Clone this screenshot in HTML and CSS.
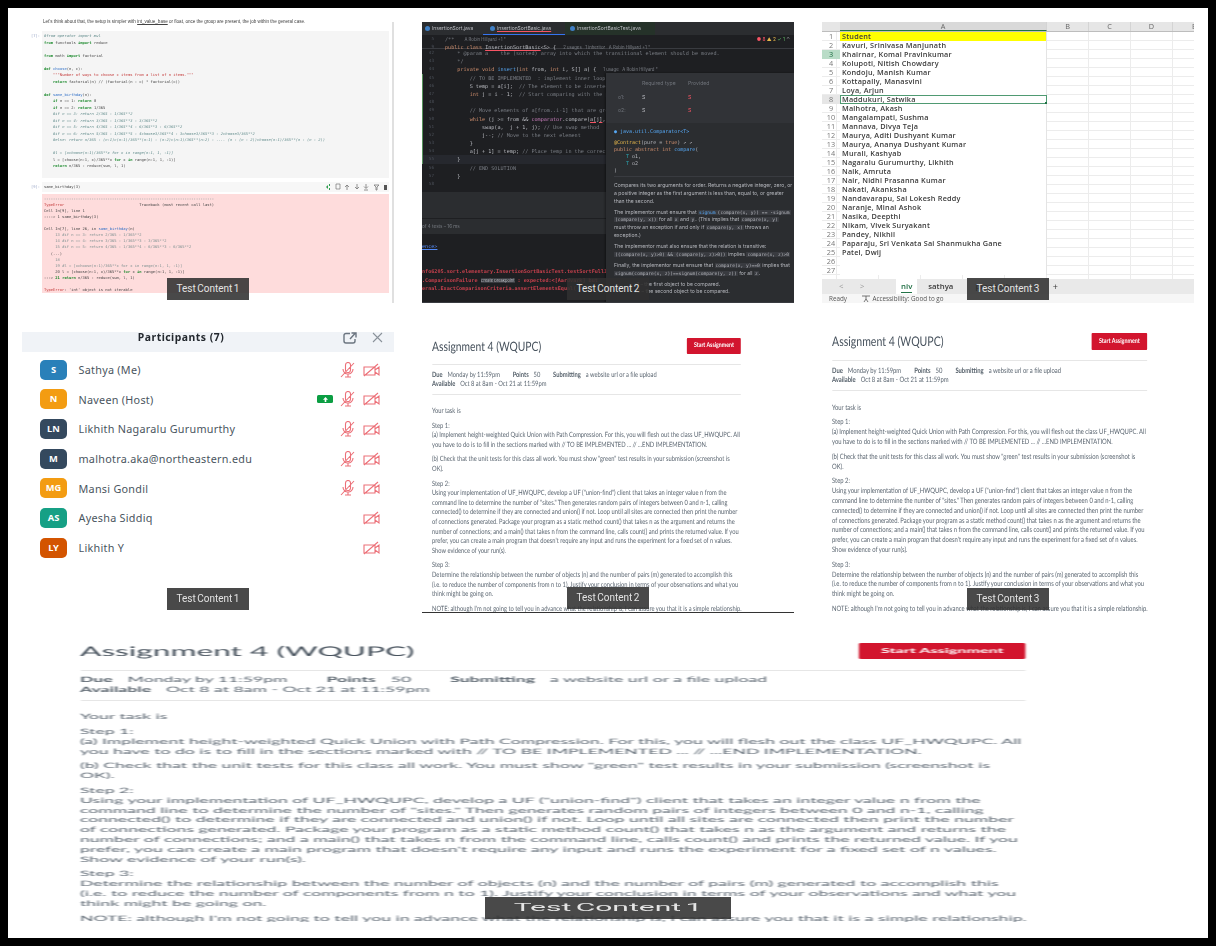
FILE: index.html
```html
<!DOCTYPE html>
<html lang="en">
<head>
    <meta charset="UTF-8">
    <meta name="viewport" content="width=device-width, initial-scale=1.0">
    <title>Test Content</title>
    <link rel="stylesheet" href="styles.css">
</head>
<body>
<div class="frame">

    <!-- Notebook -->
    <div class="tile tile-open">
        <div class="soft notebook">
            <div class="nb-intro">Let's think about that, the setup is simpler with <u>int_value_base</u> or float, once the group are present, the job within the general case.</div>
            <div class="nb-cell">
                <div class="nb-prompt">[7]:</div>
<pre class="nb-code"><i>#from operator import mul</i>
<b>from</b> functools <b>import</b> reduce

<b>from</b> math <b>import</b> factorial

<b>def</b> <s>choose</s>(n, c):
    <em>"""Number of ways to choose c items from a list of n items."""</em>
    <b>return</b> factorial(n) // (factorial(n - c) * factorial(c))

<b>def</b> <s>same_birthday</s>(n):
    <b>if</b> n == 1: <b>return</b> 0
    <b>if</b> n == 2: <b>return</b> 1/365
    <i>#if n == 3: return 2/365 - 1/365**2</i>
    <i>#if n == 4: return 3/365 - 1/365**3 - 3/365**2</i>
    <i>#if n == 5: return 4/365 - 1/365**4 - 6/365**3 - 6/365**2</i>
    <i>#if n == 6: return 5/365 - 1/365**5 - 4choose3/365**4 - 3choose3/365**3 - 2choose3/365**2</i>
    <i>#else: return n/365 - (n-1)c(n-1)/365**(n-1) - (n-2)c(n-1)/365**(n-2) - .... (n - (n - 2))choose(n-1)/365**(n - (n - 2))</i>

    <i>#l = [xchoose(n-1)/365**x for x in range(n-1, 1, -1)]</i>
    l = [choose(n-1, x)/365**x <b>for</b> x <b>in</b> range(n-1, 1, -1)]
    <b>return</b> n/365 - reduce(sum, l, 1)
</pre>
            </div>
            <div class="nb-cell nb-cell-short">
                <div class="nb-prompt">[9]:</div>
                <div class="nb-input">
                    <span>same_birthday(3)</span>
                    <svg class="nb-tools" width="64" height="8" viewBox="0 0 64 8">
                        <path d="M1 4l2-2v4zM4 1h1v2H4zM4 5h1v2H4z" fill="#2e9e4f"/>
                        <path d="M11 1h4v5h-4z" fill="none" stroke="#777" stroke-width=".7"/>
                        <path d="M22 7V2M20 4l2-2 2 2M32 1v5M30 4l2 2 2-2M39 7h4M41 1v4M39 3.500l2 2 2-2M49 2h5l-2 2v3h-1V4z" fill="none" stroke="#777" stroke-width=".8"/>
                        <path d="M59 2h3v5h-3z" fill="#555"/>
                    </svg>
                </div>
            </div>
<pre class="nb-output"><span class="dim">---------------------------------------------------------------------------</span>
<em>TypeError</em>                                 Traceback (most recent call last)
Cell In[9], line 1
----&gt; 1 same_birthday(3)

Cell In[7], line 26, in <s>same_birthday</s>(n)
     <span class="dim">13 #if n == 3: return 2/365 - 1/365**2</span>
     <span class="dim">14 #if n == 4: return 3/365 - 1/365**3 - 3/365**2</span>
     <span class="dim">15 #if n == 5: return 4/365 - 1/365**4 - 6/365**3 - 6/365**2</span>
   (...)
     <span class="dim">18</span>
     <span class="dim">19 #l = [xchoose(n-1)/365**x for x in range(n-1, 1, -1)]</span>
     20 l = [choose(n-1, x)/365**x <b>for</b> x <b>in</b> range(n-1, 1, -1)]
---&gt; <b>21 return</b> n/365 - reduce(sum, l, 1)

<em>TypeError</em>: 'int' object is not iterable</pre>
        </div>
        <div class="tag">Test Content 1</div>
    </div>

    <!-- IDE -->
    <div class="tile">
        <div class="soft ide">
            <div class="ide-tabs">
                <div class="ide-tab">InsertionSort.java</div>
                <div class="ide-tab ide-tab-on">InsertionSortBasic.java</div>
                <div class="ide-tab ide-tab-test">InsertionSortBasicTest.java</div>
            </div>
            <div class="ide-sticky">
                <div class="ide-line"><span class="ln">5</span><code class="gray">/**  <small>A Robin Hillyard +1 *</small></code></div>
                <div class="ide-line"><span class="ln">9</span><code><span class="orange">public class</span> <u class="red-u">InsertionSortBasic</u>&lt;S&gt; { <small>2 usages   1 inheritor   A Robin Hillyard +1 *</small></code></div>
                <div class="ide-status"><span class="red">● 8</span> <span class="amber">▲ 2</span> <span class="grn">✓ 1</span> ⌃</div>
            </div>
            <div class="ide-line"><span class="ln">42</span><code class="gray">    * @param a    the (sorted) array into which the transitional element should be moved.</code></div>
            <div class="ide-line"><span class="ln">43</span><code class="gray">    */</code></div>
            <div class="ide-line"><span class="ln">44</span><code>    <span class="orange">private void</span> <span class="blue">insert</span>(<span class="orange">int</span> from, <span class="orange">int</span> i, S[] a) { <small>1 usage   A Robin Hillyard *</small></code></div>
            <div class="ide-line ide-new"><span class="ln">45</span><code class="gray">        // TO BE IMPLEMENTED  : implement inner loop of insertion sort</code></div>
            <div class="ide-line ide-new"><span class="ln">46</span><code>        S temp = a[i];  <span class="gray">// The element to be inserted</span></code></div>
            <div class="ide-line ide-new"><span class="ln">47</span><code>        <span class="orange">int</span> j = i - 1;  <span class="gray">// Start comparing with the previous</span></code></div>
            <div class="ide-line ide-new"><span class="ln">48</span><code></code></div>
            <div class="ide-line ide-new"><span class="ln">49</span><code class="gray">        // Move elements of a[from..i-1] that are greater</code></div>
            <div class="ide-line ide-new"><span class="ln">50</span><code>        <span class="orange">while</span> (j &gt;= from &amp;&amp; <span class="purple">comparator</span>.compare(<u class="red-u">a[j]</u>, temp</code></div>
            <div class="ide-line ide-new"><span class="ln">51</span><code>            swap(a,  j + 1, j); <span class="gray">// Use swap method</span></code></div>
            <div class="ide-line ide-new"><span class="ln">52</span><code>            j--; <span class="gray">// Move to the next element</span></code></div>
            <div class="ide-line ide-new"><span class="ln">53</span><code>        }</code></div>
            <div class="ide-line ide-new"><span class="ln">54</span><code>        a[j + 1] = temp; <span class="gray">// Place temp in the correct</span></code></div>
            <div class="ide-line ide-new ide-current"><span class="ln">55</span><code>    }</code></div>
            <div class="ide-line"><span class="ln">56</span><code class="gray">        // END SOLUTION</code></div>
            <div class="ide-line"><span class="ln">57</span><code>    }</code></div>
            <div class="ide-line"><span class="ln">58</span><code></code></div>
            <div class="ide-panel"></div>
            <div class="ide-tests">of 4 tests – 16 ms</div>
            <div class="ide-console">
                <div class="con-link">ence&gt;</div>
                <div class="con-err">nfo6205.sort.elementary.InsertionSortBasicTest.testSortFull1</div>
                <div class="con-err">.ComparisonFailure <span class="con-chip">Create breakpoint</span> : expected:&lt;[Aardvark] but</div>
                <div class="con-err">ernal.ExactComparisonCriteria.assertElementsEqual(</div>
            </div>
            <div class="popup">
                <div class="popup-top">
                    <div class="popup-row popup-muted"><span></span><span>Required type</span><span>Provided</span></div>
                    <div class="popup-row"><span class="popup-muted">o1:</span><span>S</span><span class="red">S</span></div>
                    <div class="popup-row"><span class="popup-muted">o2:</span><span>S</span><span class="red">S</span></div>
                </div>
                <div class="popup-body">
<pre class="popup-code"><span class="popup-class"><span class="blue">● java.util.Comparator&lt;T&gt;</span></span>
<span class="amber">@Contract</span>(pure = <span class="orange">true</span>) ↗ ↗
<span class="orange">public abstract int</span> <span class="blue">compare</span>(
    <span class="teal">T</span> o1,
    <span class="teal">T</span> o2
)</pre>
                    <p>Compares its two arguments for order. Returns a negative integer, zero, or<br>a positive integer as the first argument is less than, equal to, or greater<br>than the second.</p>
                    <p>The implementor must ensure that <kbd class="blue">signum</kbd><kbd>(compare(x, y)) == -signum</kbd><br><kbd>(compare(y, x))</kbd> for all <kbd>x</kbd> and <kbd>y</kbd>. (This implies that <kbd>compare(x, y)</kbd><br>must throw an exception if and only if <kbd>compare(y, x)</kbd> throws an<br>exception.)</p>
                    <p>The implementor must also ensure that the relation is transitive:<br><kbd>((compare(x, y)&gt;0) &amp;&amp; (compare(y, z)&gt;0))</kbd> implies <kbd>compare(x, z)&gt;0</kbd></p>
                    <p>Finally, the implementor must ensure that <kbd>compare(x, y)==0</kbd> implies that<br><kbd>signum(compare(x, z))==signum(compare(y, z))</kbd> for all <kbd>z</kbd>.</p>
                    <p class="popup-params">o1 – the first object to be compared.<br>o2 – the second object to be compared.</p>
                </div>
            </div>
            <div class="ide-foot"></div>
        </div>
        <div class="tag">Test Content 2</div>
    </div>

    <!-- Spreadsheet -->
    <div class="tile">
        <div class="soft sheet">
            <div class="sheet-head">
                <span class="rh"></span><span class="col col-a">A</span><span class="col">B</span><span class="col">C</span><span class="col">D</span><span class="col col-e">E</span>
            </div>
            <div class="sheet-rows">
                <div class="row"><span class="rh">1</span><span class="cell cell-title">Student</span></div>
                <div class="row"><span class="rh">2</span><span class="cell">Kavuri, Srinivasa Manjunath</span></div>
                <div class="row"><span class="rh rh-on">3</span><span class="cell">Khairnar, Komal Pravinkumar</span></div>
                <div class="row"><span class="rh">4</span><span class="cell">Kolupoti, Nitish Chowdary</span></div>
                <div class="row"><span class="rh">5</span><span class="cell">Kondoju, Manish Kumar</span></div>
                <div class="row"><span class="rh">6</span><span class="cell">Kottapally, Manasvini</span></div>
                <div class="row"><span class="rh">7</span><span class="cell">Loya, Arjun</span></div>
                <div class="row"><span class="rh rh-sel">8</span><span class="cell cell-sel">Maddukuri, Satwika</span></div>
                <div class="row"><span class="rh">9</span><span class="cell">Malhotra, Akash</span></div>
                <div class="row"><span class="rh">10</span><span class="cell">Mangalampati, Sushma</span></div>
                <div class="row"><span class="rh">11</span><span class="cell">Mannava, Divya Teja</span></div>
                <div class="row"><span class="rh">12</span><span class="cell">Maurya, Aditi Dushyant Kumar</span></div>
                <div class="row"><span class="rh">13</span><span class="cell">Maurya, Ananya Dushyant Kumar</span></div>
                <div class="row"><span class="rh">14</span><span class="cell">Murali, Kashyab</span></div>
                <div class="row"><span class="rh">15</span><span class="cell">Nagaralu Gurumurthy, Likhith</span></div>
                <div class="row"><span class="rh">16</span><span class="cell">Naik, Amruta</span></div>
                <div class="row"><span class="rh">17</span><span class="cell">Nair, Nidhi Prasanna Kumar</span></div>
                <div class="row"><span class="rh">18</span><span class="cell">Nakati, Akanksha</span></div>
                <div class="row"><span class="rh">19</span><span class="cell">Nandavarapu, Sai Lokesh Reddy</span></div>
                <div class="row"><span class="rh">20</span><span class="cell">Naranje, Minal Ashok</span></div>
                <div class="row"><span class="rh">21</span><span class="cell">Nasika, Deepthi</span></div>
                <div class="row"><span class="rh">22</span><span class="cell">Nikam, Vivek Suryakant</span></div>
                <div class="row"><span class="rh">23</span><span class="cell">Pandey, Nikhil</span></div>
                <div class="row"><span class="rh">24</span><span class="cell">Paparaju, Sri Venkata Sai Shanmukha Gane</span></div>
                <div class="row"><span class="rh">25</span><span class="cell">Patel, Dwij</span></div>
                <div class="row"><span class="rh">26</span><span class="cell"></span></div>
                <div class="row"><span class="rh">27</span><span class="cell"></span></div>
            </div>
            <div class="sheet-tabs">
                <span class="sheet-nav">&lt;</span><span class="sheet-nav">&gt;</span>
                <span class="sheet-tab sheet-tab-on"><span>niv</span></span>
                <span class="sheet-tab">sathya</span>
                <span class="sheet-tab">pragnesh</span>
                <span class="sheet-add">+</span>
            </div>
            <div class="sheet-status">
                <span>Ready</span>
                <span class="sheet-acc">
                    <svg width="10" height="7" viewBox="0 0 10 7"><path d="M1 1h8M5 1v3M5 4L3 7M5 4l2 3" fill="none" stroke="#555" stroke-width=".8"/></svg>
                    Accessibility: Good to go
                </span>
            </div>
        </div>
        <div class="tag">Test Content 3</div>
    </div>

    <!-- Participants -->
    <div class="tile">
        <div class="soft people">
            <div class="people-head">
                <span class="people-title">Participants (7)</span>
                <svg class="people-popout" width="14" height="12" viewBox="0 0 14 12"><path d="M7 1.500H3a2 2 0 0 0-2 2V9a2 2 0 0 0 2 2h7a2 2 0 0 0 2-2V7M7 7l5-5.500M8.500 1H13v4.500" fill="none" stroke="#6b7580" stroke-width="1.400"/></svg>
                <svg class="people-close" width="11" height="11" viewBox="0 0 11 11"><path d="M1 1l9 9M10 1l-9 9" stroke="#8a929a" stroke-width="1.100"/></svg>
            </div>
            <div class="person">
                <span class="avatar av-blue">S</span><span class="name">Sathya (Me)</span>
                <svg class="ico-mic" width="15" height="16" viewBox="0 0 15 16"><path d="M5.500 3a2.500 2.500 0 0 1 5 0v5a2.500 2.500 0 0 1-5 0zM3 7a5 5 0 0 0 10 0M8 12v3M5 15h6M1 15L14 1" fill="none" stroke="#ec7078" stroke-width="1.100"/></svg>
                <svg class="ico-cam" width="17" height="14" viewBox="0 0 17 14"><path d="M1 4h11v8H1zM12 7l4-3v8l-4-3M1 13L15 1" fill="none" stroke="#ec7078" stroke-width="1.100"/></svg>
            </div>
            <div class="person">
                <span class="avatar av-orange">N</span><span class="name">Naveen (Host)</span>
                <span class="share"><svg width="5" height="5" viewBox="0 0 5 5"><path d="M2.500 0L5 2.700H3.300V5H1.700V2.700H0z" fill="#fff"/></svg></span>
                <svg class="ico-mic" width="15" height="16" viewBox="0 0 15 16"><path d="M5.500 3a2.500 2.500 0 0 1 5 0v5a2.500 2.500 0 0 1-5 0zM3 7a5 5 0 0 0 10 0M8 12v3M5 15h6M1 15L14 1" fill="none" stroke="#ec7078" stroke-width="1.100"/></svg>
                <svg class="ico-cam" width="17" height="14" viewBox="0 0 17 14"><path d="M1 4h11v8H1zM12 7l4-3v8l-4-3M1 13L15 1" fill="none" stroke="#ec7078" stroke-width="1.100"/></svg>
            </div>
            <div class="person">
                <span class="avatar av-navy">LN</span><span class="name">Likhith Nagaralu Gurumurthy</span>
                <svg class="ico-mic" width="15" height="16" viewBox="0 0 15 16"><path d="M5.500 3a2.500 2.500 0 0 1 5 0v5a2.500 2.500 0 0 1-5 0zM3 7a5 5 0 0 0 10 0M8 12v3M5 15h6M1 15L14 1" fill="none" stroke="#ec7078" stroke-width="1.100"/></svg>
                <svg class="ico-cam" width="17" height="14" viewBox="0 0 17 14"><path d="M1 4h11v8H1zM12 7l4-3v8l-4-3M1 13L15 1" fill="none" stroke="#ec7078" stroke-width="1.100"/></svg>
            </div>
            <div class="person">
                <span class="avatar av-navy">M</span><span class="name">malhotra.aka@northeastern.edu</span>
                <svg class="ico-mic" width="15" height="16" viewBox="0 0 15 16"><path d="M5.500 3a2.500 2.500 0 0 1 5 0v5a2.500 2.500 0 0 1-5 0zM3 7a5 5 0 0 0 10 0M8 12v3M5 15h6M1 15L14 1" fill="none" stroke="#ec7078" stroke-width="1.100"/></svg>
                <svg class="ico-cam" width="17" height="14" viewBox="0 0 17 14"><path d="M1 4h11v8H1zM12 7l4-3v8l-4-3M1 13L15 1" fill="none" stroke="#ec7078" stroke-width="1.100"/></svg>
            </div>
            <div class="person">
                <span class="avatar av-orange">MG</span><span class="name">Mansi Gondil</span>
                <svg class="ico-mic" width="15" height="16" viewBox="0 0 15 16"><path d="M5.500 3a2.500 2.500 0 0 1 5 0v5a2.500 2.500 0 0 1-5 0zM3 7a5 5 0 0 0 10 0M8 12v3M5 15h6M1 15L14 1" fill="none" stroke="#ec7078" stroke-width="1.100"/></svg>
                <svg class="ico-cam" width="17" height="14" viewBox="0 0 17 14"><path d="M1 4h11v8H1zM12 7l4-3v8l-4-3M1 13L15 1" fill="none" stroke="#ec7078" stroke-width="1.100"/></svg>
            </div>
            <div class="person">
                <span class="avatar av-green">AS</span><span class="name">Ayesha Siddiq</span>
                <svg class="ico-cam" width="17" height="14" viewBox="0 0 17 14"><path d="M1 4h11v8H1zM12 7l4-3v8l-4-3M1 13L15 1" fill="none" stroke="#ec7078" stroke-width="1.100"/></svg>
            </div>
            <div class="person">
                <span class="avatar av-rust">LY</span><span class="name">Likhith Y</span>
                <svg class="ico-cam" width="17" height="14" viewBox="0 0 17 14"><path d="M1 4h11v8H1zM12 7l4-3v8l-4-3M1 13L15 1" fill="none" stroke="#ec7078" stroke-width="1.100"/></svg>
            </div>
        </div>
        <div class="tag">Test Content 1</div>
    </div>

    <!-- Assignment, slightly smaller copy with a rule under it -->
    <div class="tile tile-ruled">
        <div class="soft assign assign-tight">
            <div class="assign-head"><h1>Assignment 4 (WQUPC)</h1><span class="start">Start Assignment</span></div>
            <div class="assign-meta">
                <div><b>Due</b>Monday by 11:59pm<b class="gap">Points</b>50<b class="gap">Submitting</b>a website url or a file upload</div>
                <div><b>Available</b>Oct 8 at 8am - Oct 21 at 11:59pm</div>
            </div>
            <p>Your task is</p>
            <p>Step 1:<br>(a) Implement height-weighted Quick Union with Path Compression. For this, you will flesh out the class UF_HWQUPC. All<br>you have to do is to fill in the sections marked with // TO BE IMPLEMENTED ... // ...END IMPLEMENTATION.</p>
            <p>(b) Check that the unit tests for this class all work. You must show "green" test results in your submission (screenshot is<br>OK).</p>
            <p>Step 2:<br>Using your implementation of UF_HWQUPC, develop a UF ("union-find") client that takes an integer value n from the<br>command line to determine the number of "sites." Then generates random pairs of integers between 0 and n-1, calling<br>connected() to determine if they are connected and union() if not. Loop until all sites are connected then print the number<br>of connections generated. Package your program as a static method count() that takes n as the argument and returns the<br>number of connections; and a main() that takes n from the command line, calls count() and prints the returned value. If you<br>prefer, you can create a main program that doesn't require any input and runs the experiment for a fixed set of n values.<br>Show evidence of your run(s).</p>
            <p>Step 3:<br>Determine the relationship between the number of objects (n) and the number of pairs (m) generated to accomplish this<br>(i.e. to reduce the number of components from n to 1). Justify your conclusion in terms of your observations and what you<br>think might be going on.</p>
            <p>NOTE: although I'm not going to tell you in advance what the relationship is, I can assure you that it is a simple relationship.</p>
        </div>
        <div class="tag">Test Content 2</div>
    </div>

    <!-- Assignment -->
    <div class="tile">
        <div class="soft assign">
            <div class="assign-head"><h1>Assignment 4 (WQUPC)</h1><span class="start">Start Assignment</span></div>
            <div class="assign-meta">
                <div><b>Due</b>Monday by 11:59pm<b class="gap">Points</b>50<b class="gap">Submitting</b>a website url or a file upload</div>
                <div><b>Available</b>Oct 8 at 8am - Oct 21 at 11:59pm</div>
            </div>
            <p>Your task is</p>
            <p>Step 1:<br>(a) Implement height-weighted Quick Union with Path Compression. For this, you will flesh out the class UF_HWQUPC. All<br>you have to do is to fill in the sections marked with // TO BE IMPLEMENTED ... // ...END IMPLEMENTATION.</p>
            <p>(b) Check that the unit tests for this class all work. You must show "green" test results in your submission (screenshot is<br>OK).</p>
            <p>Step 2:<br>Using your implementation of UF_HWQUPC, develop a UF ("union-find") client that takes an integer value n from the<br>command line to determine the number of "sites." Then generates random pairs of integers between 0 and n-1, calling<br>connected() to determine if they are connected and union() if not. Loop until all sites are connected then print the number<br>of connections generated. Package your program as a static method count() that takes n as the argument and returns the<br>number of connections; and a main() that takes n from the command line, calls count() and prints the returned value. If you<br>prefer, you can create a main program that doesn't require any input and runs the experiment for a fixed set of n values.<br>Show evidence of your run(s).</p>
            <p>Step 3:<br>Determine the relationship between the number of objects (n) and the number of pairs (m) generated to accomplish this<br>(i.e. to reduce the number of components from n to 1). Justify your conclusion in terms of your observations and what you<br>think might be going on.</p>
            <p>NOTE: although I'm not going to tell you in advance what the relationship is, I can assure you that it is a simple relationship.</p>
        </div>
        <div class="tag">Test Content 3</div>
    </div>

    <!-- Same assignment stretched three times wide -->
    <div class="tile tile-wide">
        <div class="soft assign">
            <div class="assign-head"><h1>Assignment 4 (WQUPC)</h1><span class="start">Start Assignment</span></div>
            <div class="assign-meta">
                <div><b>Due</b>Monday by 11:59pm<b class="gap">Points</b>50<b class="gap">Submitting</b>a website url or a file upload</div>
                <div><b>Available</b>Oct 8 at 8am - Oct 21 at 11:59pm</div>
            </div>
            <p>Your task is</p>
            <p>Step 1:<br>(a) Implement height-weighted Quick Union with Path Compression. For this, you will flesh out the class UF_HWQUPC. All<br>you have to do is to fill in the sections marked with // TO BE IMPLEMENTED ... // ...END IMPLEMENTATION.</p>
            <p>(b) Check that the unit tests for this class all work. You must show "green" test results in your submission (screenshot is<br>OK).</p>
            <p>Step 2:<br>Using your implementation of UF_HWQUPC, develop a UF ("union-find") client that takes an integer value n from the<br>command line to determine the number of "sites." Then generates random pairs of integers between 0 and n-1, calling<br>connected() to determine if they are connected and union() if not. Loop until all sites are connected then print the number<br>of connections generated. Package your program as a static method count() that takes n as the argument and returns the<br>number of connections; and a main() that takes n from the command line, calls count() and prints the returned value. If you<br>prefer, you can create a main program that doesn't require any input and runs the experiment for a fixed set of n values.<br>Show evidence of your run(s).</p>
            <p>Step 3:<br>Determine the relationship between the number of objects (n) and the number of pairs (m) generated to accomplish this<br>(i.e. to reduce the number of components from n to 1). Justify your conclusion in terms of your observations and what you<br>think might be going on.</p>
            <p>NOTE: although I'm not going to tell you in advance what the relationship is, I can assure you that it is a simple relationship.</p>
        </div>
        <div class="tag">Test Content 1</div>
    </div>

</div>
</body>
</html>
```

FILE: styles.css
```css
html, body {
    margin: 0;
    height: 100%;
}
body {
    background-color: #000;
    padding: 8px;
    box-sizing: border-box;
    overflow: hidden;
}
.frame {
    background-color: #fff;
    height: 930px;
    padding: 14px;
    box-sizing: border-box;
    display: grid;
    grid-template-columns: repeat(3, 372px);
    grid-template-rows: repeat(3, 281px);
    column-gap: 28px;
    row-gap: 28.5px;
}
.tile {
    position: relative;
    overflow: hidden;
}
.tile-open {
    overflow: visible;
}
.tile-ruled {
    border-bottom: 1px solid #333;
}
.tile-wide {
    grid-column: 1 / -1;
    width: 372px;
    justify-self: center;
    transform: scaleX(3);
}
.soft {
    height: 100%;
    box-sizing: border-box;
    filter: blur(0.4px);
}
.tag {
    position: absolute;
    left: 145px;
    bottom: 3px;
    width: 82px;
    height: 22px;
    line-height: 22px;
    text-align: center;
    background-color: rgba(48, 48, 48, 0.88);
    color: #e4e4e4;
    font-family: Roboto, sans-serif;
    font-size: 10px;
    word-spacing: -1px;
    white-space: nowrap;
}

/* Notebook */
.notebook {
    border-right: 2px solid #e0e0e0;
    padding: 0 3px 0 9px;
    font-family: "DejaVu Sans Mono", monospace;
    font-size: 3.780px;
    line-height: 6.500px;
    color: #444;
    filter: blur(0.55px);
}
.nb-intro {
    padding: 0 0 0 12px;
    font-family: "Liberation Sans", sans-serif;
    font-size: 4.560px;
    height: 9px;
    line-height: 0;
    white-space: nowrap;
}
.nb-cell {
    display: flex;
}
.nb-cell-short {
    margin-top: 4px;
}
.nb-prompt {
    width: 10.700px;
    flex: none;
    color: #9aa7c7;
    padding-top: 2px;
}
.nb-code {
    flex: 1;
    margin: 0;
    background-color: #f5f5f5;
    padding: 2px 2.300px 0;
    height: 147px;
    box-sizing: border-box;
    font: inherit;
    white-space: pre;
    overflow: hidden;
}
.nb-code b, .nb-output b {
    color: #1c8a2d;
    font-weight: bold;
}
.nb-code i {
    color: #5f8a8a;
}
.nb-code em, .nb-output em {
    color: #c43a3a;
    font-style: normal;
}
.nb-code s, .nb-output s {
    color: #2f6fc7;
    text-decoration: none;
}
.nb-input {
    flex: 1;
    height: 10px;
    background-color: #f7f7f7;
    padding: 1.500px 0 0 2.300px;
    box-sizing: border-box;
    display: flex;
    justify-content: space-between;
}
.nb-tools {
    flex: none;
    margin-top: -1px;
}
.nb-output {
    margin: 2px 0 0 10.700px;
    background-color: #fedcdc;
    padding: 1.700px 2.300px 0;
    height: 99px;
    box-sizing: border-box;
    font: inherit;
    line-height: 6.100px;
    overflow: hidden;
}
.dim {
    color: #7d9090;
}

/* IDE */
.ide {
    position: relative;
    background-color: #1e1f22;
    color: #bcbec4;
    font-family: "DejaVu Sans Mono", monospace;
    font-size: 5.130px;
    line-height: 8.200px;
    overflow: hidden;
    filter: blur(0.5px);
}
.ide small {
    font-family: Inter, sans-serif;
    font-size: 4.300px;
    color: #7a7e85;
    margin-left: 4px;
}
.ide-tabs {
    display: flex;
    height: 13px;
    background-color: #2b2d30;
    font-family: Inter, sans-serif;
    font-size: 5px;
    line-height: 12px;
}
.ide-tab {
    padding: 0 8px 0 10px;
    width: 43px;
    white-space: nowrap;
}
.ide-tab::before {
    content: "";
    display: inline-block;
    width: 5px;
    height: 5px;
    margin: 0 2px 0 -7px;
    border-radius: 50%;
    background-color: #3f7fc4;
    vertical-align: -0.500px;
}
.ide-tab-on {
    width: 60px;
    padding-left: 14px;
    box-shadow: inset 0 -1px 0 #3574f0;
    text-decoration: underline;
    text-decoration-color: #f75464;
}
.ide-tab-test {
    width: 70px;
    padding-left: 12px;
    background-color: #253229;
}
.ide-sticky {
    position: relative;
    height: 14px;
    background-color: #1e1f22;
    border-bottom: 1px solid #393b40;
    line-height: 8px;
    box-sizing: border-box;
}
.ide-status {
    position: absolute;
    right: 4px;
    top: 0;
    font-size: 4.800px;
    font-family: Inter, "DejaVu Sans", sans-serif;
}
.ide-line {
    display: flex;
    height: 8.200px;
    white-space: pre;
    box-sizing: border-box;
}
.ide-new {
    border-left: 1px solid #549159;
}
.ide-current {
    background-color: #26282e;
}
.ln {
    flex: none;
    width: 11px;
    margin-left: 1px;
    margin-right: 11px;
    text-align: right;
    color: #4b5059;
    font-size: 4.300px;
}
.ide-new .ln {
    margin-left: 0;
}
code {
    font: inherit;
}
.gray { color: #7a7e85; }
.orange { color: #cf8e6d; }
.blue { color: #56a8f5; }
.purple { color: #c77dbb; }
.teal { color: #2aacb8; }
.red { color: #f75464; }
.amber { color: #e8b84b; }
.grn { color: #5fb865; }
.red-u {
    text-decoration: underline;
    text-decoration-color: #f75464;
}
.ide-panel {
    height: 26px;
    margin-top: 4px;
    background-color: #2b2d30;
}
.ide-tests {
    height: 16px;
    line-height: 16px;
    background-color: #2b2d30;
    border-top: 1px solid #1e1f22;
    box-sizing: border-box;
    color: #7a7e85;
    font-family: Inter, sans-serif;
    font-size: 4.600px;
}
.ide-console {
    line-height: 8.500px;
    padding-top: 8px;
    white-space: nowrap;
}
.con-link {
    color: #548af7;
    text-decoration: underline;
    height: 25px;
}
.con-err {
    color: #c4404c;
    font-weight: bold;
    height: 8.500px;
}
.con-chip {
    background-color: #393b40;
    color: #bcbec4;
    font-family: Inter, sans-serif;
    font-size: 4px;
    font-weight: normal;
}
.ide-foot {
    position: absolute;
    left: 0;
    right: 0;
    bottom: 0;
    height: 1px;
    background-color: #393b40;
}
.popup {
    position: absolute;
    left: 184px;
    top: 51px;
    width: 188px;
    bottom: 0;
    background-color: #2b2d30;
    box-shadow: -1px 0 2px rgba(0, 0, 0, 0.4);
    font-family: Inter, sans-serif;
    font-size: 5.100px;
    line-height: 7.800px;
    color: #b4b6bc;
    white-space: nowrap;
}
.popup-top {
    height: 50px;
    padding: 5px 0 0 12px;
    background-color: #313337;
    box-sizing: border-box;
}
.popup-row {
    display: grid;
    grid-template-columns: 24px 46px 1fr;
    height: 13.500px;
    line-height: 10px;
}
.popup-muted {
    color: #6f737a;
}
.popup-body {
    padding: 5px 0 0 8px;
}
.popup-code {
    margin: 0 0 5px;
    padding-bottom: 2px;
    border-bottom: 1px solid #393b40;
    font-family: "DejaVu Sans Mono", monospace;
    font-size: 5px;
    line-height: 7px;
}
.popup-class {
    display: inline-block;
    padding-bottom: 4px;
    line-height: 7px;
}
.popup p {
    margin: 0 0 3.200px;
}
kbd {
    font-family: "DejaVu Sans Mono", monospace;
    font-size: 4.600px;
    background-color: #393b40;
    padding: 0 1px;
}
.popup-params {
    padding-left: 20px;
}

/* Spreadsheet */
.sheet {
    font-family: "Open Sans", sans-serif;
    font-size: 7.300px;
    line-height: 9px;
    color: #3a3a3a;
    background-color: #fff;
    overflow: hidden;
    filter: blur(0.3px);
}
.sheet-head {
    display: flex;
    height: 10px;
    background-color: #e6e6e6;
    border-bottom: 1px solid #bdbdbd;
    box-sizing: border-box;
    text-align: center;
    color: #666;
}
.rh {
    flex: none;
    width: 18px;
    text-align: center;
    color: #777;
}
.rh-on {
    background-color: #b9dcc7;
    color: #1f6e43;
}
.rh-sel {
    background-color: #e6e6e6;
}
.col {
    flex: none;
    width: 42px;
    border-right: 1px solid #d4d4d4;
    box-sizing: border-box;
}
.col-a {
    width: 207px;
    background-color: #d9d9d9;
    border-bottom: 1px solid #217346;
}
.col-e {
    border-right: none;
}
.sheet-rows {
    height: 247px;
    overflow: hidden;
    background-image: repeating-linear-gradient(90deg, transparent 0, transparent 41px, #ececec 41px, #ececec 42px);
    background-position: 225px 0;
    background-size: 42px 100%;
    background-repeat: repeat-x;
}
.row {
    display: flex;
    height: 9px;
    background-image: linear-gradient(#ececec, #ececec);
    background-size: 100% 1px;
    background-position: 0 100%;
    background-repeat: no-repeat;
}
.cell {
    position: relative;
    flex: none;
    width: 207px;
    padding-left: 2px;
    box-sizing: border-box;
    border-right: 1px solid #e4e4e4;
    background-color: #fff;
    white-space: nowrap;
    font-weight: 600;
    letter-spacing: 0.200px;
}
.cell-title {
    background-color: #ffff00;
}
.cell-sel {
    outline: 1px solid #4f9a72;
    outline-offset: -1px;
}
.cell-sel::after {
    content: "";
    position: absolute;
    right: -1px;
    bottom: 0;
    width: 2px;
    height: 2px;
    background-color: #217346;
}
.sheet-tabs {
    display: flex;
    align-items: center;
    height: 15px;
    padding-left: 7px;
    background-color: #e9e9e9;
    font-weight: 600;
    font-size: 7.800px;
}
.sheet-nav {
    width: 21px;
    padding-left: 10px;
    box-sizing: border-box;
    color: #9a9a9a;
    font-weight: 400;
}
.sheet-tab {
    padding: 0 11px;
    height: 100%;
    line-height: 15px;
}
.sheet-tab-on {
    margin-left: 25px;
    padding: 0 5px;
    background-color: #fff;
    color: #1f6e43;
}
.sheet-tab-on span {
    display: inline-block;
    line-height: 12px;
    border-bottom: 1px solid #217346;
}
.sheet-add {
    padding-left: 31px;
    font-size: 9px;
    font-weight: 400;
}
.sheet-status {
    display: flex;
    gap: 14px;
    padding-left: 7px;
    font-size: 6.300px;
    line-height: 9px;
    color: #555;
    background-color: #f6f6f6;
}
.sheet-acc svg {
    vertical-align: -1px;
}

/* Participants */
.people {
    font-family: "Noto Sans", sans-serif;
    color: #4a5560;
    background-color: #fff;
    filter: blur(0.25px);
}
.people-head {
    position: relative;
    height: 20px;
    background-color: #f0f3f7;
    margin-bottom: 3.200px;
    text-align: center;
    padding-right: 54px;
    line-height: 6px;
}
.people-title {
    font-size: 10.400px;
    font-weight: 700;
    letter-spacing: 0.500px;
    color: #23282e;
}
.people-popout {
    position: absolute;
    left: 321px;
    top: 0;
}
.people-close {
    position: absolute;
    left: 350px;
    top: 0;
}
.person {
    display: flex;
    align-items: center;
    height: 29.700px;
    padding: 0 14px 0 18px;
}
.avatar {
    flex: none;
    width: 27px;
    height: 20px;
    border-radius: 5px;
    margin-right: 11.500px;
    text-align: center;
    color: #fff;
    font-size: 9.300px;
    font-weight: 700;
    line-height: 20px;
}
.av-blue { background-color: #2980b9; }
.av-orange { background-color: #f39c12; }
.av-navy { background-color: #34495e; }
.av-green { background-color: #16a085; }
.av-rust { background-color: #d35400; }
.name {
    flex: 1;
    font-size: 10.800px;
    letter-spacing: 0.270px;
    white-space: nowrap;
}
.share {
    flex: none;
    width: 16px;
    height: 8px;
    margin-right: 7px;
    background-color: #0b9e43;
    border-radius: 1.500px;
    display: flex;
    align-items: center;
    justify-content: center;
}
.ico-mic {
    flex: none;
    margin-right: 8px;
}
.ico-cam {
    flex: none;
}

/* Assignment: the page was squeezed sideways, so text keeps its height */
.assign {
    width: 469.100px;
    transform: scaleX(0.793);
    transform-origin: 0 0;
    padding: 0 59.300px 0 12.600px;
    font-family: Lato, sans-serif;
    font-size: 7.420px;
    line-height: 9.800px;
    text-rendering: geometricPrecision;
    white-space: nowrap;
    color: #5a6570;
    background-color: #fff;
}
.assign-tight {
    zoom: 0.98;
    width: 478.600px;
    padding: 5px 68.200px 0 12.900px;
    filter: blur(0.45px);
}
.assign-head {
    display: flex;
    justify-content: space-between;
    align-items: center;
    padding-top: 1.500px;
    padding-bottom: 10.500px;
    border-bottom: 1px solid #e6e6e6;
}
.assign h1 {
    margin: 0;
    font-size: 13.300px;
    line-height: 16.500px;
    font-weight: 400;
    color: #47525d;
}
.start {
    width: 69.400px;
    height: 16.500px;
    line-height: 16px;
    text-align: center;
    background-color: #d2152e;
    border-radius: 1px;
    color: #fff;
    font-size: 6.800px;
    font-weight: 700;
}
.assign-meta {
    padding: 4.600px 0 5px;
    border-bottom: 1px solid #e6e6e6;
    margin-bottom: 11.500px;
    font-size: 7.420px;
}
.assign-meta b {
    margin-right: 6.300px;
    color: #55606a;
}
.assign-meta .gap {
    margin-left: 16.400px;
}
.assign p {
    margin: 0 0 5px;
}
```
